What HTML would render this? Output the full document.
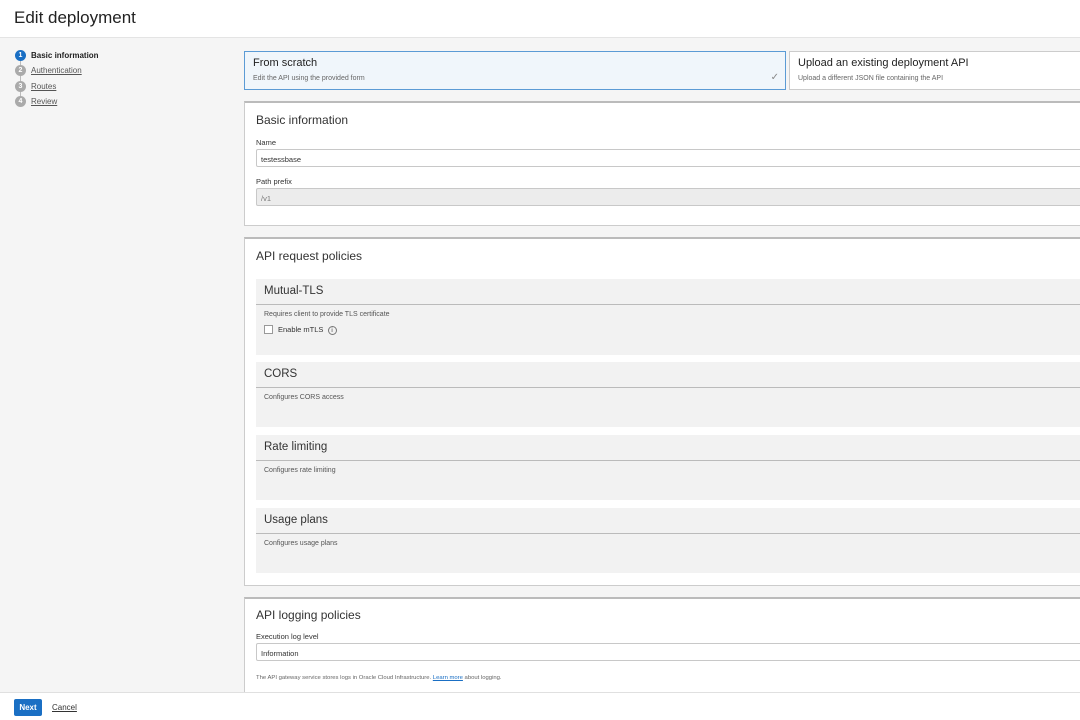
<!DOCTYPE html>
<html><head><meta charset="utf-8"><style>
*{box-sizing:border-box;margin:0;padding:0}
body{width:1080px;height:720px;overflow:hidden;background:#f5f5f5;font-family:"Liberation Sans",Arial,sans-serif;color:#333;position:relative}
.abs{position:absolute}
.hdr{left:0;top:0;width:1080px;height:38px;background:#fff;border-bottom:1px solid #e4e4e4}
.hdr h1{position:absolute;left:14px;top:8px;font-size:17px;font-weight:normal;color:#222}
.step{position:absolute;left:15px;font-size:8px;color:#555}
.step i{position:absolute;left:0;top:0;width:11px;height:11px;border-radius:50%;background:#aaa;color:#fff;font-style:normal;font-size:7px;text-align:center;line-height:11px;font-weight:bold}
.step span{position:absolute;left:16px;top:1px;white-space:nowrap;text-decoration:underline}
.tile{position:absolute;top:51px;height:39px;border:1px solid #ccc;background:#fff}
.tile b{position:absolute;left:8px;top:5px;font-weight:normal;font-size:11px;color:#222}
.tile s{position:absolute;left:8px;top:23px;text-decoration:none;font-size:7px;color:#666}
.card{position:absolute;left:244px;width:850px;background:#fff;border:1px solid #ccc;border-top:2px solid #bbb}
.ct{position:absolute;left:11px;font-size:12px;color:#333}
.lbl{position:absolute;left:11px;font-size:7.5px;color:#333}
.inp{position:absolute;left:11px;width:840px;height:18px;border:1px solid #c8c8c8;border-radius:2px;font-size:7.5px;padding:5px 4px;background:#fff}
.sec{position:absolute;left:11px;width:840px;height:65px;background:#f2f2f2}
.sec .h{height:26px;border-bottom:1px solid #bbb;font-size:11.5px;padding:6px 8px;color:#333}
.sec .d{font-size:7px;color:#555;padding:6px 8px}
.ftr{left:0;top:692px;width:1080px;height:28px;background:#fff;border-top:1px solid #e0e0e0}
</style></head><body>
<div class="abs hdr"><h1>Edit deployment</h1></div>
<div class="step" style="top:50px"><i style="background:#1a6fc4">1</i><span style="text-decoration:none;font-weight:bold;color:#222">Basic information</span></div>
<div class="step" style="top:65px"><i>2</i><span>Authentication</span></div>
<div class="step" style="top:81px"><i>3</i><span>Routes</span></div>
<div class="step" style="top:96px"><i>4</i><span>Review</span></div>
<div class="abs" style="left:20px;top:61px;width:1px;height:36px;background:#bbb;z-index:-1"></div>
<div class="tile" style="left:244px;width:542px;background:#f0f6fb;border-color:#5b9bd5"><b>From scratch</b><s>Edit the API using the provided form</s><span style="position:absolute;right:6px;top:20px;font-size:10px;color:#888">✓</span></div>
<div class="tile" style="left:789px;width:300px"><b>Upload an existing deployment API</b><s>Upload a different JSON file containing the API</s></div>
<div class="card" style="top:101px;height:125px">
<div class="ct" style="top:10px">Basic information</div>
<div class="lbl" style="top:35px">Name</div>
<div class="inp" style="top:46px">testessbase</div>
<div class="lbl" style="top:74px">Path prefix</div>
<div class="inp" style="top:85px;background:#ececec;color:#777">/v1</div>
</div>
<div class="card" style="top:237px;height:349px">
<div class="ct" style="top:10px">API request policies</div>
<div class="sec" style="top:40px;height:76px"><div class="h">Mutual-TLS</div><div class="d">Requires client to provide TLS certificate</div>
<div style="position:absolute;left:8px;top:46px;width:9px;height:9px;border:1px solid #999;background:#fff"></div>
<div style="position:absolute;left:22px;top:46px;font-size:7.5px;color:#333">Enable mTLS <span style="display:inline-block;width:9px;height:9px;border:1px solid #777;border-radius:50%;font-size:6px;text-align:center;line-height:8px;margin-left:2px">i</span></div></div>
<div class="sec" style="top:123px"><div class="h">CORS</div><div class="d">Configures CORS access</div></div>
<div class="sec" style="top:196px"><div class="h">Rate limiting</div><div class="d">Configures rate limiting</div></div>
<div class="sec" style="top:269px"><div class="h">Usage plans</div><div class="d">Configures usage plans</div></div>
</div>
<div class="card" style="top:597px;height:100px">
<div class="ct" style="top:9px">API logging policies</div>
<div class="lbl" style="top:33px">Execution log level</div>
<div class="inp" style="top:44px">Information</div>
<div style="position:absolute;left:11px;top:76px;font-size:5.9px;color:#666">The API gateway service stores logs in Oracle Cloud Infrastructure. <u style="color:#1a6fc4">Learn more</u> about logging.</div>
</div>
<div class="abs ftr">
<div style="position:absolute;left:14px;top:6px;width:28px;height:17px;background:#1a6fc4;border-radius:2px;color:#fff;font-size:8px;font-weight:bold;text-align:center;line-height:17px">Next</div>
<div style="position:absolute;left:52px;top:10px;font-size:8px;color:#333;text-decoration:underline">Cancel</div>
</div>
</body></html>
